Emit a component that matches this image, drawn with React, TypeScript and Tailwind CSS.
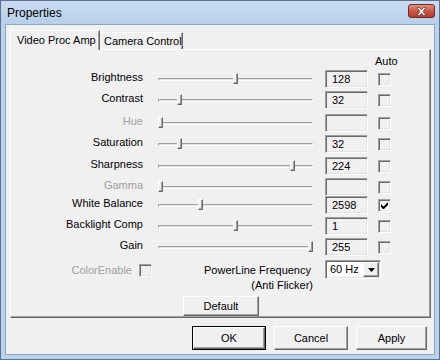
import React from "react";

type Row = {
  label: string;
  value: string;
  thumb: number;
  gap: string;
  disabled?: boolean;
  auto?: boolean;
};

const rows: Row[] = [
  { label: "Brightness", value: "128", thumb: 75, gap: "mt-[3px]" },
  { label: "Contrast", value: "32", thumb: 19, gap: "mt-[3px]" },
  { label: "Hue", value: "", thumb: 0, gap: "mt-[5px]", disabled: true },
  { label: "Saturation", value: "32", thumb: 19, gap: "mt-[3px]" },
  { label: "Sharpness", value: "224", thumb: 132, gap: "mt-[4px]" },
  { label: "Gamma", value: "", thumb: 0, gap: "mt-[3px]", disabled: true },
  { label: "White Balance", value: "2598", thumb: 40, gap: "mt-0", auto: true },
  { label: "Backlight Comp", value: "1", thumb: 75, gap: "mt-[3px]" },
  { label: "Gain", value: "255", thumb: 150, gap: "mt-[3px]" },
];

const raised =
  "border border-t-white border-l-white border-r-[#696969] border-b-[#696969] shadow-[inset_-1px_-1px_#a0a0a0] bg-[#f0f0f0]";
const sunken =
  "border border-t-[#a0a0a0] border-l-[#a0a0a0] border-r-white border-b-white shadow-[inset_1px_1px_#696969,inset_-1px_-1px_#e3e3e3]";

function CheckBox({ checked }: { checked?: boolean }) {
  return (
    <div
      className={`w-[13px] h-[13px] flex items-center justify-center ${sunken} ${
        checked ? "bg-white" : "bg-[#f0f0f0]"
      }`}
    >
      {checked && (
        <svg width="7" height="7" viewBox="0 0 7 7">
          <path d="M0 2v3l2 2h1l4-4V0L2.5 4.5z" fill="#000" />
        </svg>
      )}
    </div>
  );
}

function Slider({ thumb }: { thumb: number }) {
  return (
    <div className="relative w-[155px] h-[18px] ml-[15px] flex items-center">
      <div className="w-full h-[3px] border-t border-l border-t-[#a0a0a0] border-l-[#a0a0a0] border-b border-r border-b-white border-r-white bg-[#e3e3e3]" />
      <div
        className={`absolute top-[3px] w-[5px] h-[11px] ${raised}`}
        style={{ left: thumb }}
      />
    </div>
  );
}

export default function App() {
  return (
    <div
      className="w-[440px] h-[360px] flex flex-col bg-[#bcd2ec] border border-[#5a7391] text-[11px] text-black leading-none select-none"
      style={{ fontFamily: '"Liberation Sans", Arial, sans-serif' }}
    >
      {/* Title bar */}
      <div className="h-[23px] shrink-0 flex items-center justify-between pl-[6px] pr-[4px] bg-gradient-to-b from-[#c9dbf0] to-[#b8cfea]">
        <span className="text-[12px] text-black">Properties</span>
        <div className="w-[27px] h-[14px] mb-[3px] rounded-[3px] border border-[#6e2a26] bg-gradient-to-b from-[#e0907f] via-[#c9554a] to-[#b53d30] flex items-center justify-center">
          <svg width="11" height="9" viewBox="0 0 11 9">
            <path
              d="M1 0.5h2.5L5.5 3l2-2.5H10L7 4.5l3 4H7.5l-2-2.5-2 2.5H1l3-4z"
              fill="#fff"
              stroke="#5a1f1a"
              strokeWidth="0.6"
            />
          </svg>
        </div>
      </div>

      {/* Client */}
      <div className="flex-1 mx-[4px] mb-[4px] bg-[#f0f0f0] border border-[#8ea6c2] flex flex-col">
        {/* Tabs */}
        <div className="flex items-end mt-[5px] ml-[4px] h-[20px] relative z-10">
          <div className="h-[20px] w-[90px] border-t border-l border-t-white border-l-white border-r border-r-[#696969] shadow-[inset_-1px_0_#a0a0a0] bg-[#f0f0f0] rounded-tl-[2px] flex items-center pl-[6px] pb-[1px]">
            Video Proc Amp
          </div>
          <div className="h-[17px] w-[83px] border-t border-t-white border-r border-r-[#696969] shadow-[inset_-1px_0_#a0a0a0] bg-[#f0f0f0] flex items-center pl-[4px] mb-[1px]">
            Camera Control
          </div>
        </div>

        {/* Tab panel */}
        <div className="h-[269px] mt-[-1px] ml-[4px] mr-[3px] border border-t-white border-l-white border-r-[#696969] border-b-[#696969] shadow-[inset_-1px_-1px_#a0a0a0] flex flex-col pt-[5px]">
          <div className="h-[12px] flex items-center pl-[364px]">Auto</div>
          {rows.map((r) => (
            <div key={r.label} className={`h-[18px] flex items-center ${r.gap}`}>
              <div
                className={`w-[132px] text-right mb-[3px] ${
                  r.disabled ? "text-[#a0a0a0]" : "text-black"
                }`}
              >
                {r.label}
              </div>
              <Slider thumb={r.thumb} />
              <div
                className={`ml-[12px] w-[43px] h-[18px] ${sunken} bg-[#f0f0f0] flex items-center pl-[6px]`}
              >
                {r.value}
              </div>
              <div className="ml-[10px]">
                <CheckBox checked={r.auto} />
              </div>
            </div>
          ))}

          {/* ColorEnable / PowerLine */}
          <div className="flex mt-[4px] h-[30px]">
            <div className="w-[141px] flex items-start justify-end pt-[4px] text-[#a0a0a0]">
              <span className="mt-[1px]">ColorEnable</span>
              <div className="ml-[7px]">
                <CheckBox />
              </div>
            </div>
            <div className="w-[159px] flex flex-col items-end pt-[5px] gap-[4px]">
              <span>PowerLine Frequency</span>
              <span className="mr-[-2px]">(Anti Flicker)</span>
            </div>
            <div
              className={`ml-[14px] w-[56px] h-[19px] ${sunken} bg-white flex items-center justify-between pl-[4px] pr-[1px]`}
            >
              <span>60 Hz</span>
              <div className={`w-[16px] h-[15px] ${raised} flex items-center justify-center`}>
                <svg width="7" height="4" viewBox="0 0 7 4">
                  <path d="M0 0h7L3.5 4z" fill="#000" />
                </svg>
              </div>
            </div>
          </div>

          <div className="flex mt-[6px] pl-[172px]">
            <button className={`w-[76px] h-[20px] ${raised} text-[11px] flex items-center justify-center`}>
              Default
            </button>
          </div>
        </div>

        {/* Bottom buttons */}
        <div className="flex justify-end gap-[8px] mt-[8px] mr-[7px]">
          <button className="w-[74px] h-[24px] border border-[#000] flex">
            <span className={`flex-1 ${raised} flex items-center justify-center text-[11px]`}>
              OK
            </span>
          </button>
          <button className={`w-[74px] h-[24px] ${raised} text-[11px] flex items-center justify-center`}>
            Cancel
          </button>
          <button className={`w-[71px] h-[24px] ${raised} text-[11px] flex items-center justify-center`}>
            Apply
          </button>
        </div>
      </div>
    </div>
  );
}
